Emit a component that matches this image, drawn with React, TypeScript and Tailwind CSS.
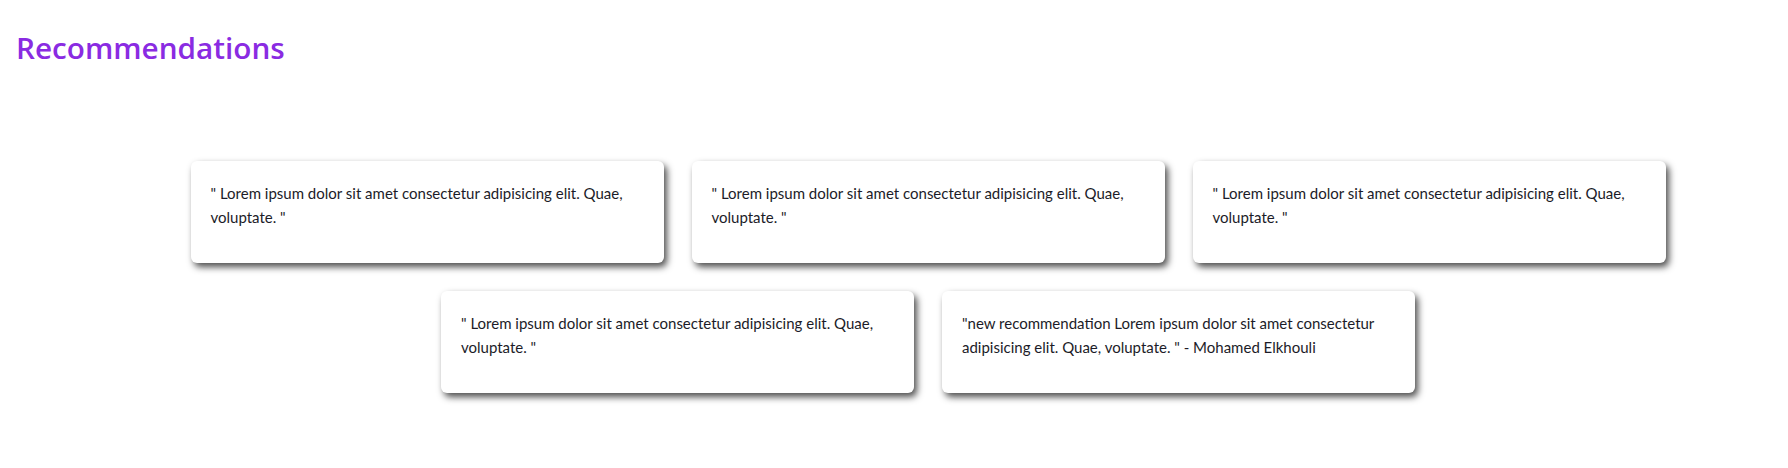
const recommendations = [
  '" Lorem ipsum dolor sit amet consectetur adipisicing elit. Quae, voluptate. "',
  '" Lorem ipsum dolor sit amet consectetur adipisicing elit. Quae, voluptate. "',
  '" Lorem ipsum dolor sit amet consectetur adipisicing elit. Quae, voluptate. "',
  '" Lorem ipsum dolor sit amet consectetur adipisicing elit. Quae, voluptate. "',
  '"new recommendation Lorem ipsum dolor sit amet consectetur adipisicing elit. Quae, voluptate. " - Mohamed Elkhouli',
];

const App = () => {
  return (
    <div className="min-h-[468px] bg-white">
      <h1 className="px-4 pt-[26px] text-[29.7px] font-semibold text-[#8a2be2] font-['Open_Sans',sans-serif]">
        Recommendations
      </h1>
      <div className="mt-[90px] pl-[68px] flex flex-wrap justify-center gap-7">
        {recommendations.map((text, i) => (
          <div
            key={i}
            className="w-[473px] h-[102px] rounded-md bg-white p-5 shadow-[3px_4px_7px_rgba(0,0,0,0.7)]"
          >
            <p className="text-[15px] leading-6 text-[#1c1c28] font-['Lato',sans-serif]">{text}</p>
          </div>
        ))}
      </div>
    </div>
  );
};

export default App;
